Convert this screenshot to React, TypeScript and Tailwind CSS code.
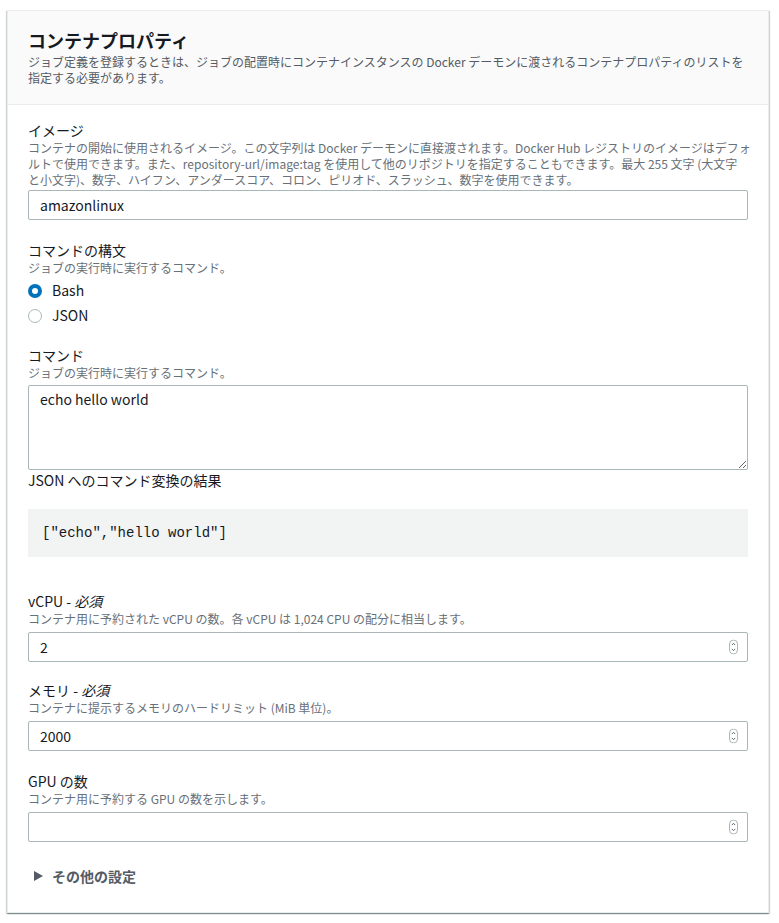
const font = "font-['Noto_Sans_CJK_JP',sans-serif]";

function Spinner() {
  return (
    <svg width="9" height="15" viewBox="0 0 9 15" className="absolute right-[10px] top-1/2 -translate-y-1/2">
      <rect x="0.5" y="0.5" width="8" height="14" rx="4" fill="#fff" stroke="#aab7b8" />
      <path d="M2.8 5.6 L4.5 3.8 L6.2 5.6" fill="none" stroke="#545b64" strokeWidth="0.9" />
      <path d="M2.8 9.4 L4.5 11.2 L6.2 9.4" fill="none" stroke="#545b64" strokeWidth="0.9" />
    </svg>
  );
}

function Label({ children }: { children: React.ReactNode }) {
  return <div className="text-[14px] leading-[20px] text-[#16191f]">{children}</div>;
}

function Desc({ lines }: { lines: string[] }) {
  return (
    <div className="text-[12px] leading-[16px] text-[#687078]">
      {lines.map((l) => (
        <div key={l} className="whitespace-nowrap">
          {l}
        </div>
      ))}
    </div>
  );
}

function NumberField({ value }: { value: string }) {
  return (
    <div className="relative mt-[5px]">
      <input
        defaultValue={value}
        className="h-[30px] w-full rounded-[2px] border border-[#aab7b8] bg-white px-[11px] text-[14px] text-[#16191f] outline-none"
      />
      <Spinner />
    </div>
  );
}

function Radio({ label, checked }: { label: string; checked?: boolean }) {
  return (
    <div className="flex h-[25px] items-center gap-[10px]">
      {checked ? (
        <span className="flex h-[14px] w-[14px] items-center justify-center rounded-full bg-[#0073bb]">
          <span className="h-[6px] w-[6px] rounded-full bg-white" />
        </span>
      ) : (
        <span className="h-[14px] w-[14px] rounded-full border border-[#aab7b8] bg-white" />
      )}
      <span className="text-[14px] text-[#16191f]">{label}</span>
    </div>
  );
}

export default function App() {
  return (
    <div className={`${font} min-h-[923px] bg-white pt-[10px]`}>
      <div className="ml-[7px] w-[762px] border border-[#eaeded] bg-white shadow-[0_1px_1px_0_rgba(0,28,36,0.3),1px_1px_1px_0_rgba(0,28,36,0.15),-1px_1px_1px_0_rgba(0,28,36,0.15)]">
        <div className="border-b border-[#eaeded] bg-[#fafafa] px-[20px] pb-[18px] pt-[18px]">
          <h2 className="text-[18px] font-bold leading-[22px] text-[#16191f]">コンテナプロパティ</h2>
          <div className="mt-[3px] text-[12px] leading-[16px] text-[#545b64]">
            <div className="whitespace-nowrap">
              ジョブ定義を登録するときは、ジョブの配置時にコンテナインスタンスの Docker デーモンに渡されるコンテナプロパティのリストを
            </div>
            <div>指定する必要があります。</div>
          </div>
        </div>

        <div className="px-[20px] pb-[26px] pt-[15px]">
          <Label>イメージ</Label>
          <Desc
            lines={[
              "コンテナの開始に使用されるイメージ。この文字列は Docker デーモンに直接渡されます。Docker Hub レジストリのイメージはデフォ",
              "ルトで使用できます。また、repository-url/image:tag を使用して他のリポジトリを指定することもできます。最大 255 文字 (大文字",
              "と小文字)、数字、ハイフン、アンダースコア、コロン、ピリオド、スラッシュ、数字を使用できます。",
            ]}
          />
          <input
            defaultValue="amazonlinux"
            className="mt-[2px] h-[30px] w-full rounded-[2px] border border-[#aab7b8] bg-white px-[11px] text-[14px] text-[#16191f] outline-none"
          />

          <div className="mt-[20px]">
            <Label>コマンドの構文</Label>
            <Desc lines={["ジョブの実行時に実行するコマンド。"]} />
            <div className="mt-[2px]">
              <Radio label="Bash" checked />
              <Radio label="JSON" />
            </div>
          </div>

          <div className="mt-[17px]">
            <Label>コマンド</Label>
            <Desc lines={["ジョブの実行時に実行するコマンド。"]} />
            <textarea
              defaultValue="echo hello world"
              className="mt-[4px] block h-[85px] w-full resize-y rounded-[2px] border border-[#aab7b8] bg-white px-[11px] py-[2px] text-[14px] leading-[22px] text-[#16191f] outline-none"
            />
            <Label>JSON へのコマンド変換の結果</Label>
            <div className="mt-[19px] flex h-[48px] items-center bg-[#f2f3f3] px-[14px] font-['Liberation_Mono',monospace] text-[14px] text-[#16191f]">
              ["echo","hello world"]
            </div>
          </div>

          <div className="mt-[34px]">
            <Label>
              vCPU - <i>必須</i>
            </Label>
            <Desc lines={["コンテナ用に予約された vCPU の数。各 vCPU は 1,024 CPU の配分に相当します。"]} />
            <NumberField value="2" />
          </div>

          <div className="mt-[18px]">
            <Label>
              メモリ - <i>必須</i>
            </Label>
            <Desc lines={["コンテナに提示するメモリのハードリミット (MiB 単位)。"]} />
            <NumberField value="2000" />
          </div>

          <div className="mt-[20px]">
            <Label>GPU の数</Label>
            <Desc lines={["コンテナ用に予約する GPU の数を示します。"]} />
            <NumberField value="" />
          </div>

          <div className="mt-[24px] flex items-center gap-[9px] pl-[6px] text-[14px] font-bold leading-[20px] text-[#545b64]">
            <svg width="9" height="10" viewBox="0 0 9 10">
              <path d="M0 0 L9 5 L0 10 Z" fill="#545b64" />
            </svg>
            その他の設定
          </div>
        </div>
      </div>
    </div>
  );
}
